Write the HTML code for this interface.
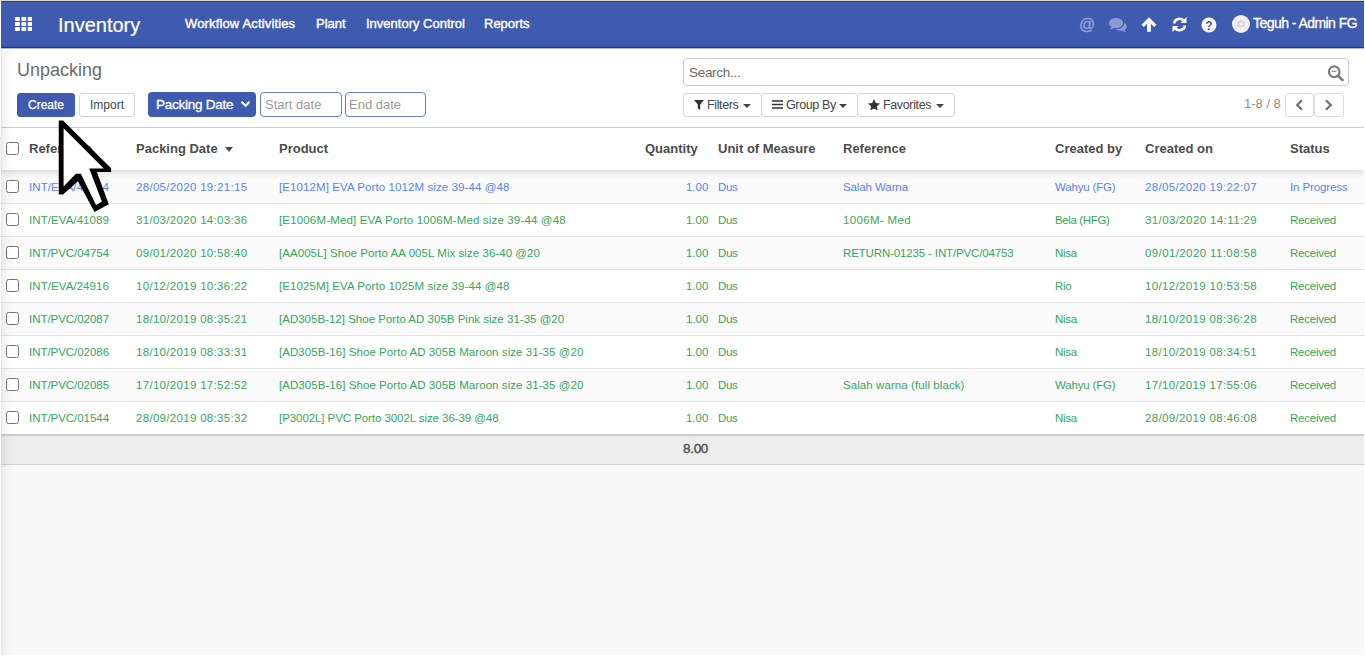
<!DOCTYPE html>
<html>
<head>
<meta charset="utf-8">
<title>Unpacking - Inventory</title>
<style>
*{box-sizing:border-box;margin:0;padding:0}
html,body{width:1365px;height:657px;overflow:hidden;background:#fff;font-family:"Liberation Sans",sans-serif}
body{position:relative}
.abs{position:absolute}
#topline{left:1px;top:0;width:1363px;height:1px;background:#d9d6cc}
#nav{left:1px;top:1px;width:1363px;height:48px;background:#3f5bb0;border-bottom:1px solid #a7abd6;box-shadow:inset 0 -1px 0 #252f99,inset 0 -2px 0 #3a52ab,inset 0 1px 0 #2e3f7c,inset 0 2px 0 #4560bb}
#nav .t{position:absolute;color:#fff;white-space:nowrap}
#brand{left:57px;top:12px;font-size:20px;line-height:24px;-webkit-text-stroke:.2px #fff}
.mi{top:15px;font-size:13px;line-height:16px;-webkit-text-stroke:.4px #fff}
#cp{left:1px;top:48px;width:1364px;height:80px;background:#fff;border-bottom:1px solid #d0d0d0}
#title{left:17px;top:59px;font-size:18px;line-height:22px;color:#6b6b6b}
.btn{height:24px;border-radius:3px;font-size:12px;line-height:22px;text-align:center;white-space:nowrap}
.btn-p{background:#3f5bb0;color:#fff;border:1px solid #3f5bb0;-webkit-text-stroke:.25px #fff}
.btn-s{background:#fff;color:#484848;border:1px solid #d4d4d4}
#content{left:1px;top:128px;width:1364px;height:529px;background:#f9f9f9}
#thead{left:1px;top:128px;width:1364px;height:42px;background:#fff;box-shadow:0 3px 6px rgba(0,0,0,.12)}
.th{position:absolute;top:141px;font-size:13px;line-height:16px;font-weight:bold;color:#4c4c4c;white-space:nowrap}
.row{position:absolute;left:1px;width:1364px;height:33px;border-bottom:1px solid #e2e2e2;font-size:11.5px;color:#34a75a}
.row.odd{background:#fafafa}
.row.even{background:#fff}
.row.blue{color:#5584f3}
.row span{position:absolute;top:9px;line-height:15px;white-space:nowrap}
.cb{position:absolute;left:5px;top:9px;width:13px;height:13px;border:1px solid #767676;border-radius:2.5px;background:#fff}
.c1{left:28px}.c2{left:135px}.c3{left:278px}.c4{right:656.6px}.c5{left:717px}.c6{left:842px}.c7{left:1054px}.c8{left:1144px}.c9{left:1289px}
#tfoot{left:1px;top:434px;width:1364px;height:31px;background:#ededed;border-top:2px solid #cbcbcb;border-bottom:1px solid #d2d2d2}

.ph{position:absolute;font-size:13px;line-height:16px;color:#9a9a9a;white-space:nowrap}
.inp{position:absolute;top:92px;height:25px;border:1px solid #687ecf;border-radius:4px;background:#fff}
.fbtn{position:absolute;top:93px;height:24px;border:1px solid #d4d4d4;border-radius:3px;background:#fff}
.ft{position:absolute;top:97px;font-size:12.5px;line-height:16px;color:#444;white-space:nowrap;letter-spacing:-.36px}
.caret{position:absolute;width:0;height:0;border-left:4px solid transparent;border-right:4px solid transparent;border-top:4px solid #444}
#lshade{left:1px;top:50px;width:14px;height:605px;background:linear-gradient(to right,rgba(0,0,0,.10) 0,rgba(0,0,0,.055) 1.5px,rgba(0,0,0,.025) 6px,rgba(0,0,0,0) 14px);pointer-events:none}
</style>
</head>
<body>
<div id="topline" class="abs"></div>
<div id="nav" class="abs">
  <svg class="abs" style="left:13.6px;top:15.5px" width="17.6" height="14" viewBox="0 0 18 14" preserveAspectRatio="none"><g fill="#fff"><rect x="0" y="0" width="5" height="4" rx="1"/><rect x="6.5" y="0" width="5" height="4" rx="1"/><rect x="13" y="0" width="5" height="4" rx="1"/><rect x="0" y="5" width="5" height="4" rx="1"/><rect x="6.5" y="5" width="5" height="4" rx="1"/><rect x="13" y="5" width="5" height="4" rx="1"/><rect x="0" y="10" width="5" height="4" rx="1"/><rect x="6.5" y="10" width="5" height="4" rx="1"/><rect x="13" y="10" width="5" height="4" rx="1"/></g></svg>
  <div id="brand" class="t">Inventory</div>
  <div class="t mi" style="left:184px;letter-spacing:.15px">Workflow Activities</div>
  <div class="t mi" style="left:315px">Plant</div>
  <div class="t mi" style="left:365px">Inventory Control</div>
  <div class="t mi" style="left:483px">Reports</div>

  <svg class="abs" style="left:1078px;top:15px" width="16" height="17" viewBox="0 0 16 17"><text x="8" y="13.5" text-anchor="middle" font-family="Liberation Sans, sans-serif" font-size="16" fill="#8d9bd3" stroke="#8d9bd3" stroke-width=".5">@</text></svg>
  <svg class="abs" style="left:1108px;top:17px" width="18" height="14" viewBox="0 0 18 14"><g fill="#8d9bd3"><path d="M7 0C3.1 0 0 2.2 0 5c0 1.5 1 2.9 2.500 3.800C2.300 9.600 1.800 10.400 1 11c1.600 0 3-.6 3.900-1.300.7.200 1.400.3 2.100.3 3.900 0 7-2.200 7-5S10.900 0 7 0z"/><path d="M15.300 5.200c0 3.300-3.600 5.900-8 5.900h-.5c1.100 1 2.900 1.700 4.900 1.700.6 0 1.200-.1 1.800-.2.800.7 2.100 1.300 3.500 1.300-.7-.6-1.100-1.400-1.300-2.100 1.400-.8 2.300-2 2.300-3.300 0-1.300-.9-2.500-2.200-3.300z" transform="translate(-.2 0)"/></g></svg>
  <svg class="abs" style="left:1140px;top:16px" width="16" height="15" viewBox="0 0 16 15"><path d="M8 0.300L0.500 7.800l2.300 2.300L6.100 6.800v7.900h3.800V6.800l3.300 3.300 2.300-2.300z" fill="#fff"/></svg>
  <svg class="abs" style="left:1171px;top:16px" width="15" height="15" viewBox="0 0 15 15"><g fill="none" stroke="#fff" stroke-width="2.600"><path d="M2 6.500A5.600 5.600 0 0 1 12 4"/><path d="M13 8.500A5.600 5.600 0 0 1 3 11"/></g><path d="M14.500 0v6h-6z" fill="#fff"/><path d="M.5 15V9h6z" fill="#fff"/></svg>
  <svg class="abs" style="left:1200px;top:16px" width="16" height="16" viewBox="0 0 16 16"><circle cx="8" cy="8" r="7.500" fill="#fff"/><text x="8" y="12.500" text-anchor="middle" font-family="Liberation Sans, sans-serif" font-weight="bold" font-size="12" fill="#3f5bb0">?</text></svg>
  <div class="abs" style="left:1231px;top:14px;width:18px;height:18px;border-radius:9px;background:#f1f1f1"></div>
  <svg class="abs" style="left:1236px;top:19px" width="8" height="7" viewBox="0 0 8 7"><rect x="0" y="1" width="8" height="6" rx="1" fill="#d9d9d9"/><rect x="2.500" y="0" width="3" height="2" fill="#d9d9d9"/><circle cx="4" cy="4" r="1.600" fill="#f1f1f1"/></svg>
  <div class="t" id="user" style="left:1252px;top:13px;font-size:14px;line-height:18px;letter-spacing:-.55px;-webkit-text-stroke:.3px #fff">Teguh - Admin FG</div>
</div>
<div id="cp" class="abs"></div>
<div class="abs" style="left:1px;top:48px;width:1364px;height:1px;background:#b4b8dd"></div>
<div id="title" class="abs">Unpacking</div>
<div class="abs btn btn-p" style="left:17px;top:93px;width:58px">Create</div>
<div class="abs btn btn-s" style="left:79px;top:93px;width:56px">Import</div>

<div class="abs" style="left:148px;top:92px;width:107.500px;height:25px;border-radius:4px;background:#3f5bb0"></div>
<div class="abs" style="left:156px;top:96px;font-size:13.5px;line-height:17px;color:#fff;white-space:nowrap;letter-spacing:-.25px;-webkit-text-stroke:.3px #fff" id="pdsel">Packing Date</div>
<svg class="abs" style="left:240px;top:100px" width="11" height="8" viewBox="0 0 11 8"><path d="M1.500 1.800l4 4 4-4" fill="none" stroke="#fff" stroke-width="2"/></svg>
<div class="inp" style="left:260px;width:81.5px"></div>
<div class="ph" style="left:265px;top:97px">Start date</div>
<div class="inp" style="left:345px;width:80.5px"></div>
<div class="ph" style="left:349px;top:97px">End date</div>

<div class="abs" style="left:683px;top:58px;width:666px;height:28px;border:1px solid #ccc;border-radius:4px;background:#fff"></div>
<div class="ph" style="left:689px;top:64.5px;color:#6a6a6a;font-size:13.5px;letter-spacing:-.3px" id="srch">Search...</div>
<svg class="abs" style="left:1327px;top:65px" width="17" height="16" viewBox="0 0 17 16"><circle cx="7.2" cy="6.700" r="5.300" fill="none" stroke="#7a7a7a" stroke-width="2.200"/><path d="M11 10.800l4.600 4.300" stroke="#7a7a7a" stroke-width="2.600" stroke-linecap="round"/><path d="M4.500 6.300h5" stroke="#888" stroke-width="1.200"/></svg>

<div class="fbtn" style="left:683px;width:78.500px"></div>
<div class="fbtn" style="left:761px;width:96.500px"></div>
<div class="fbtn" style="left:857px;width:98px"></div>
<svg class="abs" style="left:693.500px;top:100px" width="10" height="10" viewBox="0 0 10 10"><path d="M0 0h10L6.200 4.500V10L3.800 8.200V4.500z" fill="#333"/></svg>
<div class="ft" style="left:707px">Filters</div><i class="caret" style="left:743px;top:104px"></i>
<svg class="abs" style="left:771.500px;top:100px" width="11" height="9" viewBox="0 0 11 9"><path d="M0 1h11M0 4.500h11M0 8h11" stroke="#333" stroke-width="1.500"/></svg>
<div class="ft" style="left:786px">Group By</div><i class="caret" style="left:838.500px;top:104px"></i>
<svg class="abs" style="left:868px;top:99px" width="12" height="11" viewBox="0 0 12 11"><path d="M6 0l1.800 3.900 4.200.5-3.100 2.900.8 4.200L6 9.400 2.300 11.500l.8-4.200L0 4.400l4.200-.5z" fill="#333"/></svg>
<div class="ft" style="left:883px">Favorites</div><i class="caret" style="left:936px;top:104px"></i>

<div class="ft" style="left:1244px;top:96px;color:#8e8e8e;font-size:13px;letter-spacing:0" id="pager">1-8 / 8</div>
<div class="fbtn" style="left:1284.500px;width:29.500px;border-color:#dcdcdc"></div>
<div class="fbtn" style="left:1313.500px;width:30.500px;border-color:#dcdcdc"></div>
<svg class="abs" style="left:1295px;top:99px" width="9" height="12" viewBox="0 0 9 12"><path d="M7 1.200L2.200 6 7 10.800" fill="none" stroke="#707070" stroke-width="2.200"/></svg>
<svg class="abs" style="left:1324px;top:99px" width="9" height="12" viewBox="0 0 9 12"><path d="M2 1.200L6.800 6 2 10.800" fill="none" stroke="#707070" stroke-width="2.200"/></svg>

<div id="content" class="abs"></div>
<div id="rows">
<div class="row odd blue" style="top:171px"><i class="cb"></i><span class="c1" style="letter-spacing:0.07px">INT/EVA/46544</span><span class="c2" style="letter-spacing:0.31px">28/05/2020 19:21:15</span><span class="c3" style="letter-spacing:0.09px">[E1012M] EVA Porto 1012M size 39-44 @48</span><span class="c4" style="letter-spacing:0.03px">1.00</span><span class="c5" style="letter-spacing:-0.32px">Dus</span><span class="c6" style="letter-spacing:-0.1px">Salah Warna</span><span class="c7" style="letter-spacing:-0.17px">Wahyu (FG)</span><span class="c8" style="letter-spacing:0.34px">28/05/2020 19:22:07</span><span class="c9" style="letter-spacing:-0.12px">In Progress</span></div>
<div class="row even" style="top:204px"><i class="cb"></i><span class="c1" style="letter-spacing:0.07px">INT/EVA/41089</span><span class="c2" style="letter-spacing:0.31px">31/03/2020 14:03:36</span><span class="c3" style="letter-spacing:0.16px">[E1006M-Med] EVA Porto 1006M-Med size 39-44 @48</span><span class="c4" style="letter-spacing:0.03px">1.00</span><span class="c5" style="letter-spacing:-0.32px">Dus</span><span class="c6" style="letter-spacing:0.34px">1006M- Med</span><span class="c7" style="letter-spacing:-0.37px">Bela (HFG)</span><span class="c8" style="letter-spacing:0.39px">31/03/2020 14:11:29</span><span class="c9" style="letter-spacing:-0.24px">Received</span></div>
<div class="row odd" style="top:237px"><i class="cb"></i><span class="c1" style="letter-spacing:-0.04px">INT/PVC/04754</span><span class="c2" style="letter-spacing:0.31px">09/01/2020 10:58:40</span><span class="c3" style="letter-spacing:0.05px">[AA005L] Shoe Porto AA 005L Mix size 36-40 @20</span><span class="c4" style="letter-spacing:0.03px">1.00</span><span class="c5" style="letter-spacing:-0.32px">Dus</span><span class="c6" style="letter-spacing:-0.14px">RETURN-01235 - INT/PVC/04753</span><span class="c7" style="letter-spacing:-0.25px">Nisa</span><span class="c8" style="letter-spacing:0.39px">09/01/2020 11:08:58</span><span class="c9" style="letter-spacing:-0.24px">Received</span></div>
<div class="row even" style="top:270px"><i class="cb"></i><span class="c1" style="letter-spacing:0.07px">INT/EVA/24916</span><span class="c2" style="letter-spacing:0.31px">10/12/2019 10:36:22</span><span class="c3" style="letter-spacing:0.09px">[E1025M] EVA Porto 1025M size 39-44 @48</span><span class="c4" style="letter-spacing:0.03px">1.00</span><span class="c5" style="letter-spacing:-0.32px">Dus</span><span class="c6"></span><span class="c7" style="letter-spacing:-0.26px">Rio</span><span class="c8" style="letter-spacing:0.34px">10/12/2019 10:53:58</span><span class="c9" style="letter-spacing:-0.24px">Received</span></div>
<div class="row odd" style="top:303px"><i class="cb"></i><span class="c1" style="letter-spacing:-0.04px">INT/PVC/02087</span><span class="c2" style="letter-spacing:0.31px">18/10/2019 08:35:21</span><span class="c3" style="letter-spacing:0.01px">[AD305B-12] Shoe Porto AD 305B Pink size 31-35 @20</span><span class="c4" style="letter-spacing:0.03px">1.00</span><span class="c5" style="letter-spacing:-0.32px">Dus</span><span class="c6"></span><span class="c7" style="letter-spacing:-0.25px">Nisa</span><span class="c8" style="letter-spacing:0.34px">18/10/2019 08:36:28</span><span class="c9" style="letter-spacing:-0.24px">Received</span></div>
<div class="row even" style="top:336px"><i class="cb"></i><span class="c1" style="letter-spacing:-0.04px">INT/PVC/02086</span><span class="c2" style="letter-spacing:0.31px">18/10/2019 08:33:31</span><span class="c3" style="letter-spacing:0.06px">[AD305B-16] Shoe Porto AD 305B Maroon size 31-35 @20</span><span class="c4" style="letter-spacing:0.03px">1.00</span><span class="c5" style="letter-spacing:-0.32px">Dus</span><span class="c6"></span><span class="c7" style="letter-spacing:-0.25px">Nisa</span><span class="c8" style="letter-spacing:0.34px">18/10/2019 08:34:51</span><span class="c9" style="letter-spacing:-0.24px">Received</span></div>
<div class="row odd" style="top:369px"><i class="cb"></i><span class="c1" style="letter-spacing:-0.04px">INT/PVC/02085</span><span class="c2" style="letter-spacing:0.31px">17/10/2019 17:52:52</span><span class="c3" style="letter-spacing:0.06px">[AD305B-16] Shoe Porto AD 305B Maroon size 31-35 @20</span><span class="c4" style="letter-spacing:0.03px">1.00</span><span class="c5" style="letter-spacing:-0.32px">Dus</span><span class="c6" style="letter-spacing:0.08px">Salah warna (full black)</span><span class="c7" style="letter-spacing:-0.17px">Wahyu (FG)</span><span class="c8" style="letter-spacing:0.34px">17/10/2019 17:55:06</span><span class="c9" style="letter-spacing:-0.24px">Received</span></div>
<div class="row even" style="top:402px"><i class="cb"></i><span class="c1" style="letter-spacing:-0.04px">INT/PVC/01544</span><span class="c2" style="letter-spacing:0.31px">28/09/2019 08:35:32</span><span class="c3" style="letter-spacing:-0.07px">[P3002L] PVC Porto 3002L size 36-39 @48</span><span class="c4" style="letter-spacing:0.03px">1.00</span><span class="c5" style="letter-spacing:-0.32px">Dus</span><span class="c6"></span><span class="c7" style="letter-spacing:-0.25px">Nisa</span><span class="c8" style="letter-spacing:0.34px">28/09/2019 08:46:08</span><span class="c9" style="letter-spacing:-0.24px">Received</span></div>
</div>
<div id="thead" class="abs"></div>
<i class="cb" style="left:6px;top:142px"></i>
<div class="th" style="left:29px">Reference</div>
<div class="th" style="left:136px">Packing Date</div>
<div class="th" style="left:279px">Product</div>
<div class="th" style="left:645px">Quantity</div>
<div class="th" style="left:718px">Unit of Measure</div>
<div class="th" style="left:843px">Reference</div>
<div class="th" style="left:1055px">Created by</div>
<div class="th" style="left:1145px">Created on</div>
<div class="th" style="left:1290px">Status</div>
<div id="tfoot" class="abs"></div>
<div class="abs" id="total" style="left:683px;top:441px;font-size:13.5px;line-height:16px;letter-spacing:-.3px;-webkit-text-stroke:.35px #4c4c4c;color:#4c4c4c">8.00</div>

<i class="caret" style="left:225.3px;top:146.5px;border-top-color:#4c4c4c;border-left-width:4.500px;border-right-width:4.500px;border-top-width:5px"></i>
<div id="lshade" class="abs"></div>
<div class="abs" style="left:0;top:655px;width:1365px;height:2px;background:#fff"></div>
<div class="abs" style="left:1364px;top:0;width:1px;height:657px;background:#fff"></div>
<svg class="abs" style="left:50px;top:115px" width="70" height="100" viewBox="50 115 70 100"><path d="M58.75 120.4H63.1L111.1 168.2V171.9H96.9L108.8 204.3L94.5 212.1L77.9 181.2L63.1 194.5H58.75Z" fill="#000"/><path d="M63.6 128.3L103.8 168.6H89.2L101.9 201.6L96 204.9L80.9 173.7H75.9L63.6 186.5Z" fill="#fff"/></svg>
</body>
</html>
